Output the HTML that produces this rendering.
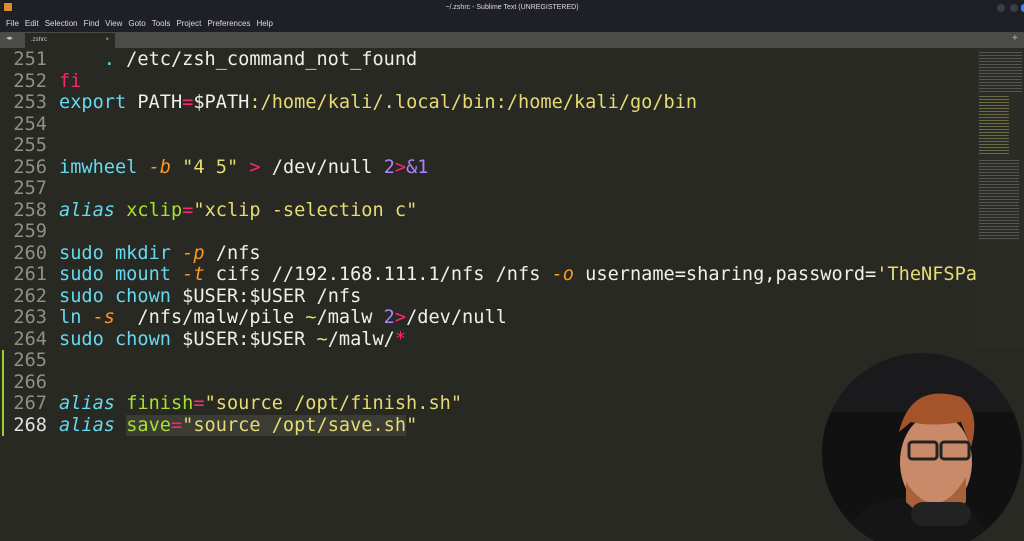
<!DOCTYPE html><html><head><style>
html,body{margin:0;width:1024px;height:541px;overflow:hidden}
body{background:#282923;position:relative;font-family:"Liberation Sans",sans-serif}
.title{position:absolute;left:0;top:0;width:1024px;height:16px;background:#1e1f27;color:#ddd;font-size:7px;text-align:center;line-height:16px}
.menu{position:absolute;left:0;top:16px;width:1024px;height:16px;background:#1e1f27;color:#ddd;font-size:8px;line-height:16px}
.menu span{margin-left:6px}
.tabs{position:absolute;left:0;top:32px;width:1024px;height:16px;background:#4b4b48;overflow:hidden}
.tab{position:absolute;left:25px;top:1px;width:90px;height:15px;background:#282923;color:#ccc;font-size:6px;line-height:14px;padding-left:6px;box-sizing:border-box}
.code{position:absolute;left:0;top:49px;width:977px;height:400px;overflow:hidden;font-family:"DejaVu Sans Mono",monospace;font-size:18.6px;line-height:21.5px;white-space:pre;color:#f0f0ea}
.ln{display:inline-block;width:47px;text-align:right;color:#8f908a;margin-right:12px}
.b{color:#66d9ef}.r{color:#f92672}.y{color:#e6db74}.o{color:#fd971f;font-style:italic}.i{color:#66d9ef;font-style:italic}.g{color:#a6e22e}.p{color:#ae81ff}
.mini{position:absolute;left:977px;top:48px;width:47px;height:300px;background:#2c2c27;overflow:hidden}
</style></head><body>
<div class="title">~/.zshrc - Sublime Text (UNREGISTERED)</div>
<div style="position:absolute;left:4px;top:3px;width:8px;height:8px;background:#e08a2c;border-radius:1px"></div>
<div style="position:absolute;left:997px;top:4px;width:8px;height:8px;border-radius:50%;background:#3a3d4a"></div>
<div style="position:absolute;left:1010px;top:4px;width:8px;height:8px;border-radius:50%;background:#3a3d4a"></div>
<div style="position:absolute;left:1021px;top:4px;width:3px;height:8px;border-radius:4px 0 0 4px;background:#3b82f6"></div>
<div class="menu"><span>File</span><span>Edit</span><span>Selection</span><span>Find</span><span>View</span><span>Goto</span><span>Tools</span><span>Project</span><span>Preferences</span><span>Help</span></div>
<div class="tabs"><span style="position:absolute;left:6px;top:2px;color:#bbb;font-size:7px">◂▸</span><div class="tab">.zshrc<span style="position:absolute;right:6px">×</span></div><span style="position:absolute;left:1012px;top:1px;color:#bbb;font-size:10px">+</span></div>
<div class="mini">
<div style="margin:4px 2px;height:40px;background:repeating-linear-gradient(#555 0 1px,transparent 1px 3px)"></div>
<div style="margin:4px 2px;width:30px;height:60px;background:repeating-linear-gradient(#6a6a40 0 1px,transparent 1px 3px)"></div>
<div style="margin:4px 2px;width:40px;height:80px;background:repeating-linear-gradient(#555 0 1px,transparent 1px 3px)"></div>
</div>
<div style="position:absolute;left:2px;top:350px;width:2px;height:86px;background:#9acd32"></div>
<div class="code"><span class="ln">251</span>    <span class="b">.</span> /etc/zsh_command_not_found
<span class="ln">252</span><span class="r">fi</span>
<span class="ln">253</span><span class="b">export</span> PATH<span class="r">=</span>$PATH<span class="y">:/home/kali/.local/bin:/home/kali/go/bin</span>
<span class="ln">254</span>
<span class="ln">255</span>
<span class="ln">256</span><span class="b">imwheel</span> <span class="o">-b</span> <span class="y">"4 5"</span> <span class="r">&gt;</span> /dev/null <span class="p">2</span><span class="r">&gt;</span><span class="p">&amp;1</span>
<span class="ln">257</span>
<span class="ln">258</span><span class="i">alias</span> <span class="g">xclip</span><span class="r">=</span><span class="y">"xclip -selection c"</span>
<span class="ln">259</span>
<span class="ln">260</span><span class="b">sudo</span> <span class="b">mkdir</span> <span class="o">-p</span> /nfs
<span class="ln">261</span><span class="b">sudo</span> <span class="b">mount</span> <span class="o">-t</span> cifs //192.168.111.1/nfs /nfs <span class="o">-o</span> username=sharing,password=<span class="y">'TheNFSPassword'</span>
<span class="ln">262</span><span class="b">sudo</span> <span class="b">chown</span> $USER:$USER /nfs
<span class="ln">263</span><span class="b">ln</span> <span class="o">-s</span>  /nfs/malw/pile <span class="y">~</span>/malw <span class="p">2</span><span class="r">&gt;</span>/dev/null
<span class="ln">264</span><span class="b">sudo</span> <span class="b">chown</span> $USER:$USER <span class="y">~</span>/malw/<span class="r">*</span>
<span class="ln">265</span>
<span class="ln">266</span>
<span class="ln">267</span><span class="i">alias</span> <span class="g">finish</span><span class="r">=</span><span class="y">"source /opt/finish.sh"</span>
<span class="ln" style="color:#e0e0e0">268</span><span class="i">alias</span> <span style="background:#3b3c33"><span class="g">save</span><span class="r">=</span><span class="y">"source /opt/save.sh</span></span><span class="y">"</span></div>
<svg style="position:absolute;left:821px;top:352px;display:block" width="203" height="189"><defs><clipPath id="c"><circle cx="101" cy="101" r="100"/></clipPath></defs>
<g clip-path="url(#c)"><rect width="203" height="189" fill="#1a1a1c"/>
<rect x="0" y="60" width="203" height="129" fill="#111"/>
<ellipse cx="95" cy="185" rx="70" ry="40" fill="#151515"/>
<ellipse cx="115" cy="110" rx="36" ry="48" fill="#c98a6a"/>
<path d="M78 80 Q90 30 140 45 Q160 60 150 95 L140 70 Q110 75 90 70 Z" fill="#a4532a"/>
<path d="M85 130 Q115 175 145 125 L145 150 Q115 180 85 150Z" fill="#a8623a"/>
<rect x="88" y="90" width="28" height="17" rx="3" fill="none" stroke="#222" stroke-width="3"/>
<rect x="120" y="90" width="28" height="17" rx="3" fill="none" stroke="#222" stroke-width="3"/>
<rect x="90" y="150" width="60" height="24" rx="12" fill="#222"/></g></svg>
</body></html>
